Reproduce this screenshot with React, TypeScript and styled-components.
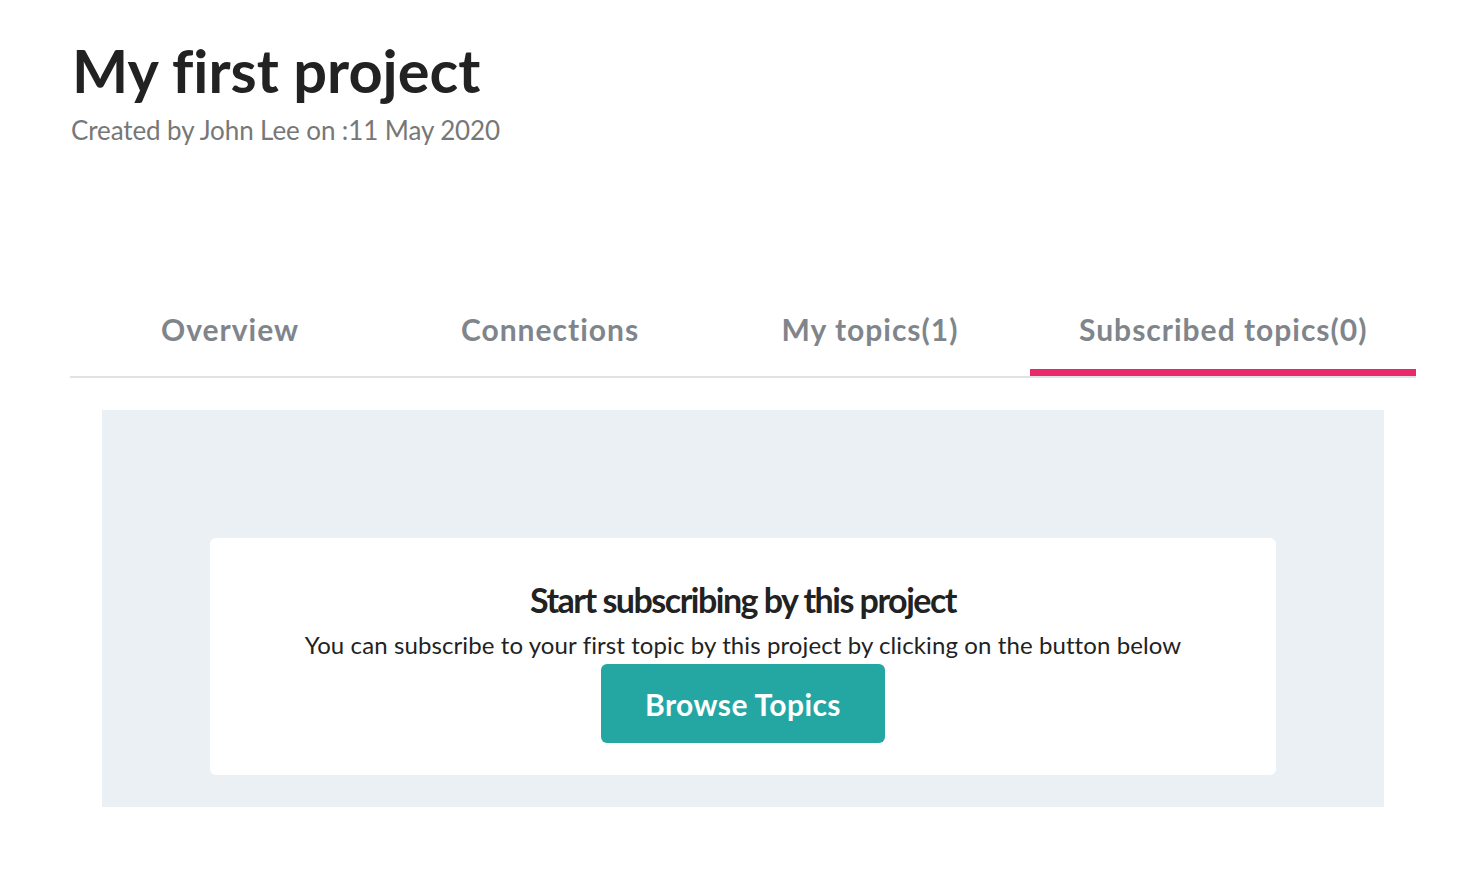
import React from "react";
import styled, { createGlobalStyle } from "styled-components";

const GlobalStyle = createGlobalStyle`
  html, body { margin: 0; padding: 0; background: #ffffff; }
  body {
    font-family: Lato, "Liberation Sans", sans-serif;
    color: #222;
    font-variant-ligatures: none;
  }
  * { box-sizing: border-box; }
`;

const Page = styled.div`
  width: 1416px;
  padding: 34px 0 0 70px;
`;

const Header = styled.header`
  display: flex;
  flex-direction: column;
  gap: 6px;
  padding-left: 2px;
`;

const Title = styled.h1`
  margin: 0;
  font-size: 59.5px;
  line-height: 72px;
  font-weight: 700;
  color: #222;
`;

const Subtitle = styled.div`
  font-size: 26px;
  line-height: 36px;
  letter-spacing: -0.1px;
  color: #777;
  margin-left: -1px;
`;

const TabBar = styled.nav`
  display: flex;
  margin-top: 140px;
  border-bottom: 2px solid #e2e2e2;
`;

const Tab = styled.div<{ $active?: boolean }>`
  flex: none;
  min-width: 320px;
  height: 88px;
  padding: 0 49px;
  display: flex;
  align-items: center;
  justify-content: center;
  white-space: nowrap;
  font-size: 30px;
  font-weight: 700;
  letter-spacing: 1px;
  color: #80858c;
  border-bottom: 7px solid ${(p) => (p.$active ? "#e8296b" : "transparent")};
`;

const Panel = styled.section`
  margin: 32px 32px 0;
  padding: 128px 108px 32px;
  background: #ebf0f4;
`;

const Card = styled.div`
  background: #fff;
  border-radius: 6px;
  padding: 40px 20px 32px;
  display: flex;
  flex-direction: column;
  align-items: center;
`;

const Heading = styled.h2`
  margin: 0;
  font-size: 34px;
  line-height: 44px;
  font-weight: 700;
  letter-spacing: -1.5px;
  color: #222;
`;

const Description = styled.p`
  margin: 8px 0 0;
  font-size: 24px;
  line-height: 30px;
  letter-spacing: 0.1px;
  color: #222;
`;

const Button = styled.button`
  margin-top: 4px;
  width: 284px;
  height: 79px;
  border: none;
  border-radius: 6px;
  background: #24a7a3;
  color: #fff;
  font-family: inherit;
  font-size: 30px;
  font-weight: 700;
  letter-spacing: 0.4px;
  cursor: pointer;
`;

const tabs = ["Overview", "Connections", "My topics(1)", "Subscribed topics(0)"];

export default function App() {
  return (
    <>
      <GlobalStyle />
      <Page>
        <Header>
          <Title>My first project</Title>
          <Subtitle>Created by John Lee on :11 May 2020</Subtitle>
        </Header>
        <TabBar>
          {tabs.map((t, i) => (
            <Tab key={t} $active={i === 3}>
              {t}
            </Tab>
          ))}
        </TabBar>
        <Panel>
          <Card>
            <Heading>Start subscribing by this project</Heading>
            <Description>
              You can subscribe to your first topic by this project by clicking on the button below
            </Description>
            <Button>Browse Topics</Button>
          </Card>
        </Panel>
      </Page>
    </>
  );
}
